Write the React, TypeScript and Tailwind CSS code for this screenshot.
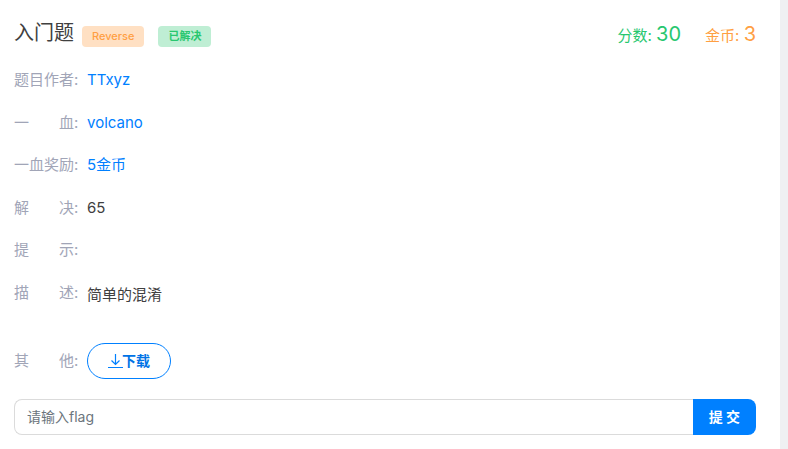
import type { ReactNode } from "react";

interface RowProps {
  label: string;
  children?: ReactNode;
}

// Two character labels are spread to the width of four characters
function Row({ label, children }: RowProps) {
  return (
    <div className="flex">
      <dt className="flex w-[73px] shrink-0 text-[#a1a5b7]">
        <span className="flex w-[60px] justify-between">
          {label.split("").map((char, i) => (
            <span key={i}>{char}</span>
          ))}
        </span>
        :
      </dt>
      <dd>{children}</dd>
    </div>
  );
}

function DownloadIcon() {
  return (
    <svg
      className="h-4 w-3.5 shrink-0 overflow-visible"
      viewBox="0 0 14 16"
      fill="none"
      stroke="#0080ff"
      aria-hidden="true"
    >
      <path d="M7.5 1v10.5M3.5 7.5l4 4 4-4" strokeWidth="1.2" />
      <path d="M0 14.5h15" />
    </svg>
  );
}

export default function App() {
  return (
    <div className="min-h-screen bg-[#eff0f2] pr-2 font-['Inter','Noto_Sans_CJK_SC',sans-serif] text-[15px] leading-normal text-[#404040]">
      <main className="min-h-screen bg-white pt-[18px] pr-6 pb-3 pl-3.5">
        <header className="flex items-start justify-between">
          <div className="flex items-start">
            <h1 className="text-xl leading-[30px]">入门题</h1>
            <span className="mt-2 ml-2 flex h-[21px] items-center rounded bg-[#ffe0c3] px-2.5 text-[11px] font-medium text-[#ff9f43]">
              Reverse
            </span>
            <span className="mt-2 ml-3.5 flex h-[21px] items-center rounded bg-[#bfeed4] px-2.5 text-[11px] font-bold text-[#28c76f]">
              已解决
            </span>
          </div>
          <div className="flex gap-6 leading-8">
            <span className="text-[#28c76f]">
              分数: <span className="text-xl leading-8">30</span>
            </span>
            <span className="text-[#ff9f43]">
              金币: <span className="text-xl leading-8">3</span>
            </span>
          </div>
        </header>

        <dl className="mt-[17px] flex flex-col gap-5">
          <Row label="题目作者">
            <a href="#author" className="text-[#0080ff]">TTxyz</a>
          </Row>
          <Row label="一血">
            <a href="#first-blood" className="text-[#0080ff]">volcano</a>
          </Row>
          <Row label="一血奖励">
            <span className="text-[#0080ff]">5金币</span>
          </Row>
          <Row label="解决">65</Row>
          <Row label="提示" />
          <Row label="描述">
            <p className="mt-0.5 mb-[23px]">简单的混淆</p>
          </Row>
          <div className="-my-1.5 flex items-center">
            <Row label="其他" />
            <button
              type="button"
              className="flex h-9 items-center rounded-full border border-[#0080ff] px-5 text-sm font-bold text-[#0073e6]"
            >
              <DownloadIcon />
              下载
            </button>
          </div>
        </dl>

        <form className="mt-[26px] flex h-9" onSubmit={(e) => e.preventDefault()}>
          <input
            type="text"
            aria-label="flag"
            placeholder="请输入flag"
            className="min-w-0 flex-1 rounded-l-lg border border-r-0 border-[#dbdbdb] px-3 text-sm outline-none placeholder:text-[#6c757d]"
          />
          <button type="submit" className="rounded-r-lg bg-[#0080ff] px-4 text-sm font-bold text-white">
            提 交
          </button>
        </form>
      </main>
    </div>
  );
}
